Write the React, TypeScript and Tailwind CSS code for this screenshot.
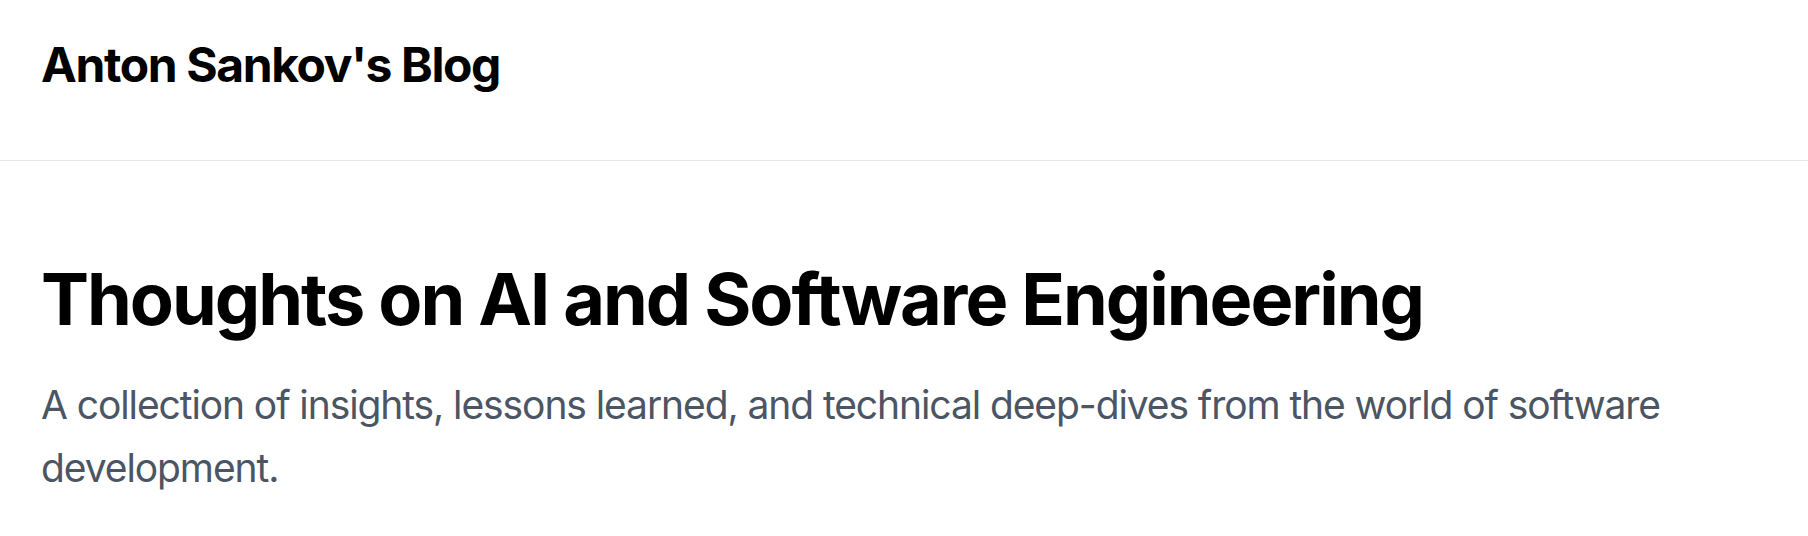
import React from 'react';

const font = { fontFamily: 'Inter, "Noto Sans", sans-serif' };

const Header: React.FC = () => (
  <header className="border-b border-[#e5e7eb] px-[41px] pt-[41px] h-[161px]">
    <h1 className="text-[48px] leading-none font-bold text-black tracking-[-0.029em]">
      Anton Sankov's Blog
    </h1>
  </header>
);

const App: React.FC = () => {
  return (
    <div className="min-h-screen bg-white" style={font}>
      <Header />
      <main className="px-[41px] pt-[102px]">
        <h2 className="text-[72px] leading-none font-bold text-black tracking-[-0.028em]">
          Thoughts on AI and Software Engineering
        </h2>
        <p className="mt-[38px] text-[39px] leading-[63px] text-[#4b5563] tracking-[-0.028em]">
          A collection of insights, lessons learned, and technical deep-dives from the world of software development.
        </p>
      </main>
    </div>
  );
};

export default App;
